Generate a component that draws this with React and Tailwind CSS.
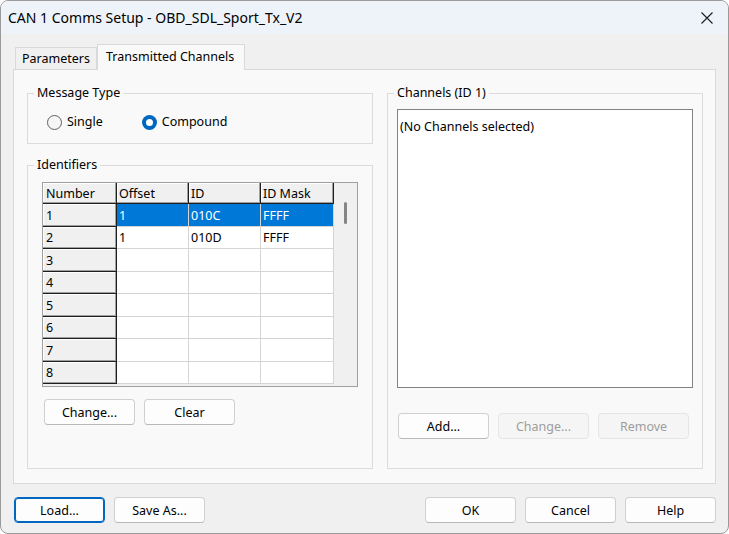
import React from 'react';

const rows = [
  { n: '1', offset: '1', id: '010C', mask: 'FFFF', selected: true, h: 'h-[23px]' },
  { n: '2', offset: '1', id: '010D', mask: 'FFFF', h: 'h-[22px]' },
  { n: '3', h: 'h-[23px]' },
  { n: '4', h: 'h-[22px]' },
  { n: '5', h: 'h-[23px]' },
  { n: '6', h: 'h-[22px]' },
  { n: '7', h: 'h-[23px]' },
  { n: '8', h: 'h-[22px]' },
];

function Button({ children, disabled, primary, className = '' }) {
  let look = 'border-[#d0d0d0] border-b-[#b8b8b8] bg-[#fdfdfd] text-black';
  if (disabled) look = 'border-[#e5e5e5] bg-[#f5f5f5] text-[#9d9d9d]';
  if (primary) look = 'border-[#0067c0] bg-[#fdfdfd] text-black shadow-[inset_0_0_0_1px_#0067c0]';
  return (
    <button
      type="button"
      disabled={disabled}
      className={`h-[26px] w-[91px] rounded-[4px] border pt-[2px] text-[12.5px] leading-none ${look} ${className}`}
    >
      {children}
    </button>
  );
}

function Radio({ checked, label }) {
  return (
    <label className="flex items-center gap-[5px]">
      {checked ? (
        <span className="flex h-[15px] w-[15px] items-center justify-center rounded-full bg-[#0067c0]">
          <span className="h-[7px] w-[7px] rounded-full bg-white" />
        </span>
      ) : (
        <span className="h-[15px] w-[15px] rounded-full border border-[#5f5f5f] bg-[#f6f6f6]" />
      )}
      <span>{label}</span>
    </label>
  );
}

function Group({ title, className = '', children }) {
  return (
    <fieldset className={`min-w-0 border border-[#dcdcdc] ${className}`}>
      <legend className="ml-[6px] px-[3px] leading-[16px]">{title}</legend>
      {children}
    </fieldset>
  );
}

const headCell = 'flex items-center border-r border-b border-[#1e1e1e] bg-[#f0f0f0] pl-[2px] pt-[2px] shadow-[inset_-1px_-1px_0_#a0a0a0,inset_1px_1px_0_#ffffff]';

function Grid() {
  return (
    <div className="flex h-[205px] w-[316px] border border-[#a0a0a0] bg-[#f0f0f0] text-[12.5px]">
      <div className="flex w-[291px] flex-col">
        <div className="flex h-[21px]">
          <div className={`${headCell} w-[74px] pl-[3px]`}>Number</div>
          <div className={`${headCell} w-[72px]`}>Offset</div>
          <div className={`${headCell} w-[72px]`}>ID</div>
          <div className={`${headCell} w-[73px]`}>ID Mask</div>
        </div>
        {rows.map((r) => {
          const cell = r.selected
            ? 'flex items-center border-r border-b border-[#d4d4d4] bg-[#0078d7] pl-[2px] pt-[2px] text-white'
            : 'flex items-center border-r border-b border-[#d4d4d4] bg-white pl-[2px] pt-[2px]';
          return (
            <div key={r.n} className={`flex ${r.h}`}>
              <div className={`${headCell} w-[74px] pl-[3px]`}>{r.n}</div>
              <div className={`${cell} w-[72px]`}>{r.offset}</div>
              <div className={`${cell} w-[72px]`}>{r.id}</div>
              <div className={`${cell} w-[73px]`}>{r.mask}</div>
            </div>
          );
        })}
      </div>
      <div className="flex flex-1 justify-center pt-[19px]">
        <div className="h-[22px] w-[3px] rounded-full bg-[#858585]" />
      </div>
    </div>
  );
}

export default function App() {
  return (
    <div className="h-[534px] w-[729px] bg-white font-['Noto_Sans',sans-serif] text-[12.5px] text-black">
      <div className="flex h-full w-full flex-col overflow-hidden rounded-[8px] border border-[#9a9a9a] bg-[#f0f0f0]">
        <div className="flex h-[33px] shrink-0 items-center justify-between bg-[#eef3f9] pl-[7px] pr-[15px]">
          <span className="text-[14px]">CAN 1 Comms Setup - OBD_SDL_Sport_Tx_V2</span>
          <svg width="12" height="12" viewBox="0 0 12 12" className="text-[#1a1a1a]">
            <path d="M0.5 0.5 L11.5 11.5 M11.5 0.5 L0.5 11.5" stroke="currentColor" strokeWidth="1.1" />
          </svg>
        </div>

        <div className="flex flex-1 flex-col px-[12px] pt-[10px] pb-[10px]">
          <div className="relative z-10 flex h-[25px] items-end">
            <div className="ml-[2px] flex h-[22px] w-[82px] items-center border border-b-0 border-[#d9d9d9] bg-[#f0f0f0] pl-[6px] pt-[2px]">
              Parameters
            </div>
            <div className="-mb-px flex h-[26px] w-[148px] items-center border border-b-0 border-[#d9d9d9] bg-[#f9f9f9] pl-[8px]">
              Transmitted Channels
            </div>
          </div>

          <div className="flex h-[415px] gap-[14px] border border-[#d9d9d9] bg-[#f9f9f9] pt-[15px] pr-[12px] pb-[14px] pl-[13px]">
            <div className="flex w-[346px] flex-col gap-[13px]">
              <Group title="Message Type" className="h-[59px]">
                <div className="flex items-center gap-[39px] pl-[19px] pt-[12px]">
                  <Radio label="Single" />
                  <Radio checked label="Compound" />
                </div>
              </Group>
              <Group title="Identifiers" className="flex-1">
                <div className="pl-[14px] pt-[9px]">
                  <Grid />
                  <div className="ml-[2px] mt-[12px] flex gap-[9px]">
                    <Button>Change...</Button>
                    <Button>Clear</Button>
                  </div>
                </div>
              </Group>
            </div>

            <Group title="Channels (ID 1)" className="flex-1">
              <div className="px-[9px] pt-[8px]">
                <div className="h-[279px] border border-[#828282] bg-white pl-[2px] pt-[8px]">
                  (No Channels selected)
                </div>
                <div className="ml-[1px] mt-[25px] flex gap-[9px]">
                  <Button>Add...</Button>
                  <Button disabled>Change...</Button>
                  <Button disabled>Remove</Button>
                </div>
              </div>
            </Group>
          </div>

          <div className="mt-[13px] flex items-center">
            <Button primary className="ml-[1px]">Load...</Button>
            <Button className="ml-[9px]">Save As...</Button>
            <div className="flex-1" />
            <div className="flex gap-[9px]">
              <Button>OK</Button>
              <Button>Cancel</Button>
              <Button>Help</Button>
            </div>
          </div>
        </div>
      </div>
    </div>
  );
}
